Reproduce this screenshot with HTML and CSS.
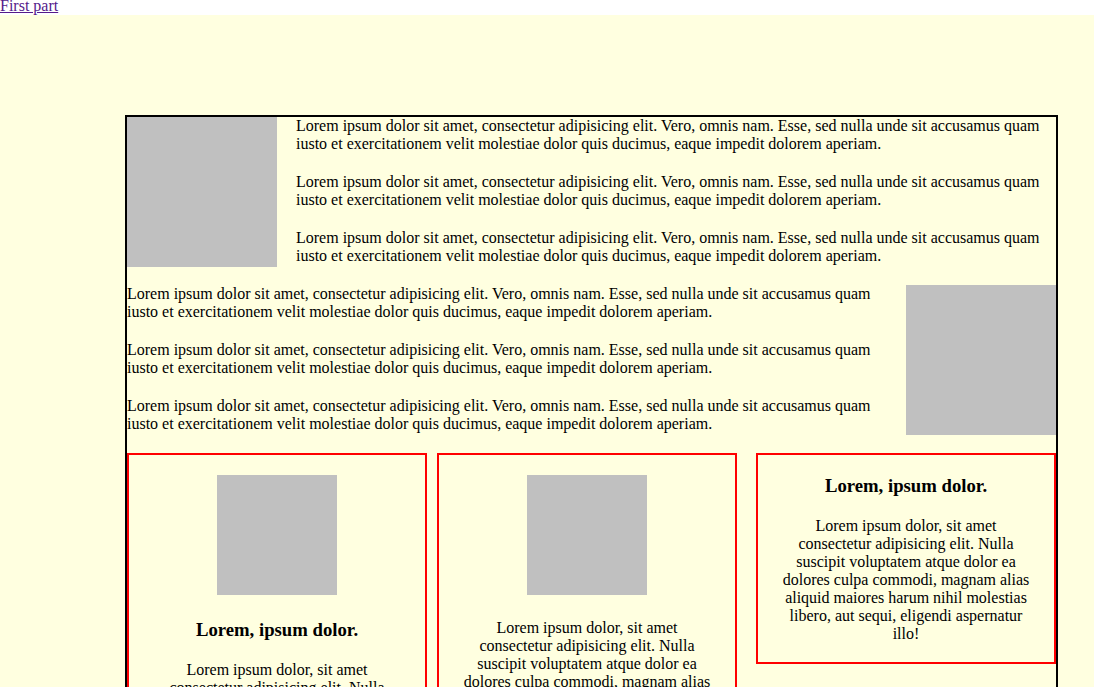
FILE: index.html
```html
<!DOCTYPE html>
<html lang="en">
<head>
<meta charset="utf-8">
<title>First part</title>
<link rel="stylesheet" href="styles.css">
</head>
<body>
<div class="topbar"><a class="toplink" href="#first">First part</a></div>
<section class="part" id="first">
  <div class="box">
    <div class="row">
      <div class="ph ph-left"></div>
      <p class="txt">Lorem ipsum dolor sit amet, consectetur adipisicing elit. Vero, omnis nam. Esse, sed nulla unde sit accusamus quam iusto et exercitationem velit molestiae dolor quis ducimus, eaque impedit dolorem aperiam.</p>
      <p class="txt">Lorem ipsum dolor sit amet, consectetur adipisicing elit. Vero, omnis nam. Esse, sed nulla unde sit accusamus quam iusto et exercitationem velit molestiae dolor quis ducimus, eaque impedit dolorem aperiam.</p>
      <p class="txt">Lorem ipsum dolor sit amet, consectetur adipisicing elit. Vero, omnis nam. Esse, sed nulla unde sit accusamus quam iusto et exercitationem velit molestiae dolor quis ducimus, eaque impedit dolorem aperiam.</p>
    </div>
    <div class="row">
      <div class="ph ph-right"></div>
      <p class="txt">Lorem ipsum dolor sit amet, consectetur adipisicing elit. Vero, omnis nam. Esse, sed nulla unde sit accusamus quam iusto et exercitationem velit molestiae dolor quis ducimus, eaque impedit dolorem aperiam.</p>
      <p class="txt">Lorem ipsum dolor sit amet, consectetur adipisicing elit. Vero, omnis nam. Esse, sed nulla unde sit accusamus quam iusto et exercitationem velit molestiae dolor quis ducimus, eaque impedit dolorem aperiam.</p>
      <p class="txt">Lorem ipsum dolor sit amet, consectetur adipisicing elit. Vero, omnis nam. Esse, sed nulla unde sit accusamus quam iusto et exercitationem velit molestiae dolor quis ducimus, eaque impedit dolorem aperiam.</p>
    </div>
    <div class="cards">
      <div class="card">
        <div class="thumb"></div>
        <h3 class="card-title">Lorem, ipsum dolor.</h3>
        <p class="card-text">Lorem ipsum dolor, sit amet consectetur adipisicing elit. Nulla suscipit voluptatem atque dolor ea dolores culpa commodi, magnam alias aliquid maiores harum nihil molestias libero, aut sequi, eligendi aspernatur illo!</p>
      </div>
      <div class="card">
        <div class="thumb"></div>
        <p class="card-text">Lorem ipsum dolor, sit amet consectetur adipisicing elit. Nulla suscipit voluptatem atque dolor ea dolores culpa commodi, magnam alias aliquid maiores harum nihil molestias libero, aut sequi, eligendi aspernatur illo!</p>
      </div>
      <div class="card card-last">
        <h3 class="card-title">Lorem, ipsum dolor.</h3>
        <p class="card-text">Lorem ipsum dolor, sit amet consectetur adipisicing elit. Nulla suscipit voluptatem atque dolor ea dolores culpa commodi, magnam alias aliquid maiores harum nihil molestias libero, aut sequi, eligendi aspernatur illo!</p>
      </div>
    </div>
  </div>
</section>
</body>
</html>
```

FILE: styles.css
```css
html, body {
  margin: 0;
  padding: 0;
}

body {
  font-family: "Liberation Serif", "Times New Roman", serif;
  font-size: 16px;
  color: #000;
  background: #fff;
}

.topbar {
  height: 15px;
  line-height: 12px;
}

.toplink {
  color: #551a8b;
  text-decoration: underline;
}

.part {
  background: #ffffe0;
  padding-top: 100px;
  min-height: 700px;
}

.box {
  margin-left: 125px;
  width: 929px;
  border: 2px solid #000;
}

.row {
  display: flow-root;
}

.txt {
  margin: 0 0 20px;
}

.ph {
  width: 150px;
  height: 150px;
  background: #c0c0c0;
}

.ph-left {
  float: left;
  margin-right: 19px;
}

.ph-right {
  float: right;
  margin-left: 19px;
}

.cards {
  display: flex;
  align-items: flex-start;
  gap: 10px;
}

.card {
  box-sizing: border-box;
  width: 300px;
  border: 2px solid red;
  padding: 20px 20px 0;
  text-align: center;
}

.card-last {
  margin-left: auto;
}

.thumb {
  width: 120px;
  height: 120px;
  background: #c0c0c0;
  margin: 0 auto 24px;
}

.card-title {
  font-size: 18.72px;
  font-weight: bold;
  margin: 0 0 20px;
}

.card-text {
  margin: 0 0 19px;
}
```
